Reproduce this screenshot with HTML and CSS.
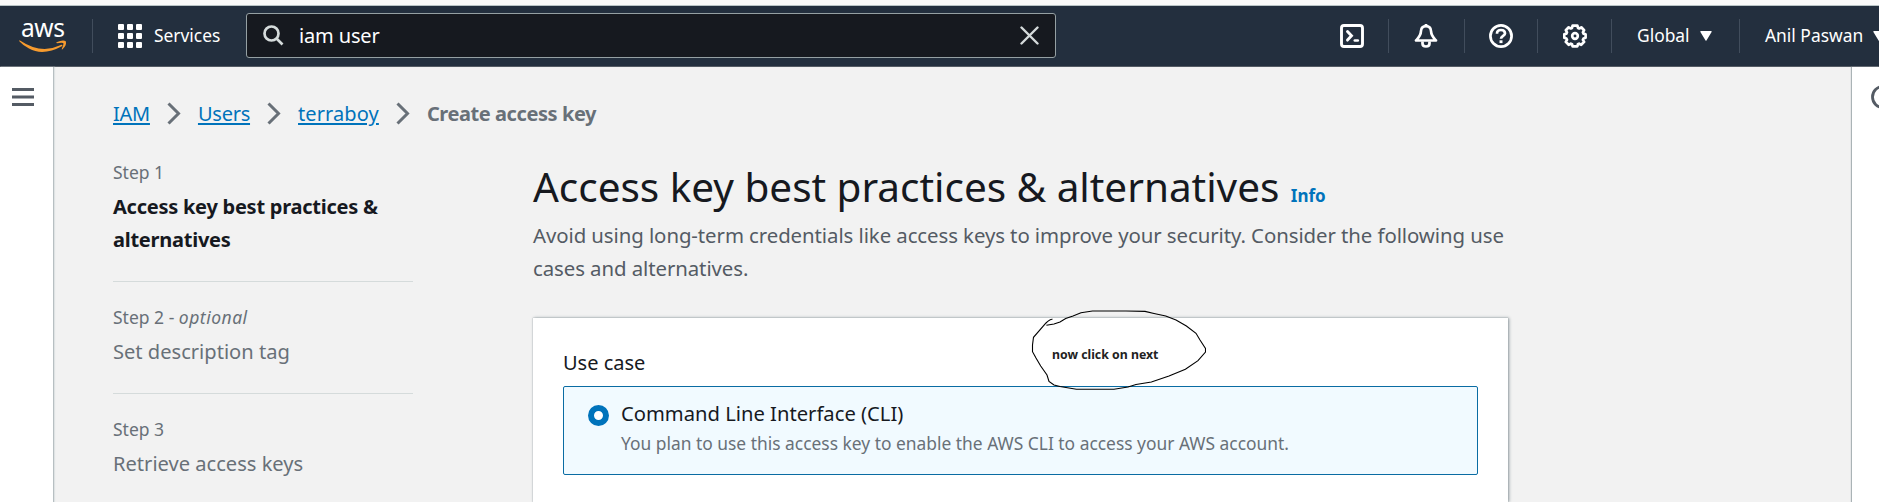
FILE: index.html
```html
<!DOCTYPE html>
<html lang="en">
<head>
<meta charset="utf-8">
<title>Create access key | IAM</title>
<link rel="stylesheet" href="styles.css">
</head>
<body>
<header class="topbar">
  <a class="logo">
    <svg width="52" height="54" viewBox="0 -6 52 54">
      <text class="logo-text" x="4" y="21.5">aws</text>
      <path d="M3 25.500 Q24 39.500 42.500 30.500 Q46 29 45.300 31 Q26 41.500 12 33.500 Q6 30.500 2.300 26.300 Q2 25 3 25.500Z" fill="#f79b2e"/>
      <path d="M39.500 27.300 Q46 24.300 48.800 26.200 Q50 30 45.500 34.300 Q44.300 35 45 33.300 Q47 29 46.200 28 Q44.500 27.200 40 28.200 Q38.800 28 39.500 27.300Z" fill="#f79b2e"/>
    </svg>
  </a>
  <span class="rule"></span>
  <div class="services">
    <svg width="24" height="24" viewBox="0 0 24 24" fill="#fff">
      <rect width="6" height="6" rx="1"/><rect x="9" width="6" height="6" rx="1"/><rect x="18" width="6" height="6" rx="1"/>
      <rect y="9" width="6" height="6" rx="1"/><rect x="9" y="9" width="6" height="6" rx="1"/><rect x="18" y="9" width="6" height="6" rx="1"/>
      <rect y="18" width="6" height="6" rx="1"/><rect x="9" y="18" width="6" height="6" rx="1"/><rect x="18" y="18" width="6" height="6" rx="1"/>
    </svg>
    <span>Services</span>
  </div>
  <div class="search">
    <svg width="21" height="21" viewBox="0 0 21 21" fill="none" stroke="#d5dbdb" stroke-width="2.700"><circle cx="8.500" cy="8.500" r="7"/><path d="M13.500 13.500l6 6"/></svg>
    <span class="query">iam user</span>
    <svg width="19" height="19" viewBox="0 0 19 19" fill="none" stroke="#d5dbdb" stroke-width="2.400" stroke-linecap="round"><path d="M1.500 1.500l16 16M17.500 1.500l-16 16"/></svg>
  </div>
  <nav class="tools">
    <span class="tool tool-shell">
      <svg width="24" height="24" viewBox="0 0 24 24" fill="none" stroke="#fff" stroke-width="2.900"><rect x="1.500" y="1.500" width="21" height="21" rx="2.500"/><path d="M7.500 7.500l4 4.300-4 4.300" stroke-linecap="round"/><path d="M14.800 16.500h3" stroke-width="2.600" stroke-linecap="round"/></svg>
    </span>
    <span class="tool tool-bell">
      <svg width="24" height="24" viewBox="0 0 24 24" fill="none" stroke="#fff" stroke-width="2.700" stroke-linejoin="round"><path d="M12 2.200C8.500 2.200 7 4.700 6.900 7.500C6.800 11.500 5 13 2 16.500H22C19 13 17.200 11.500 17.100 7.500C17 4.700 15.500 2.200 12 2.200Z"/><path d="M8.500 17.500v2c0 1.800 1.500 3 3.500 3s3.500-1.200 3.500-3v-2M12 0v2"/></svg>
    </span>
    <span class="tool tool-help">
      <svg width="24" height="24" viewBox="0 0 24 24" fill="none" stroke="#fff" stroke-width="2.700"><circle cx="12" cy="12" r="10.600"/><path d="M8 9.700C8 7.300 9.700 6 12 6s4 1.300 4 3.400c0 2.400-4 2.700-4 5.400"/><path d="M10.500 17.700h3" stroke-width="2.800"/></svg>
    </span>
    <span class="tool tool-gear">
      <svg width="24" height="24" viewBox="0 0 24 24" fill="none" stroke="#fff" stroke-width="2.700" stroke-linejoin="round"><path d="M9.600 1.700h4.800l.6 2.300 1.200.5 2.100-1.200 2.800 2.900-1.200 2.100.6 1.300 2.100.600v3.600l-2.100.700-.6 1.300 1.200 2.100-2.900 2.900-2.100-1.200-1.200.6-.5 2.100h-4.800l-.6-2.100-1.200-.6-2.100 1.200-2.900-2.900 1.200-2.100-.6-1.300-2.100-.7v-3.600l2.100-.6.6-1.300-1.200-2.100 2.900-2.900 2.100 1.200 1.200-.5z"/><circle cx="12" cy="12" r="2.800"/></svg>
    </span>
    <span class="tool tool-region">Global <svg width="12" height="10" viewBox="0 0 12 10" fill="#fff"><path d="M1 0h10q1.200 0 .6 1L6.600 9.300q-.6 1-1.200 0L.4 1Q-.2 0 1 0z"/></svg></span>
    <span class="tool tool-account">Anil Paswan <svg width="12" height="10" viewBox="0 0 12 10" fill="#fff"><path d="M1 0h10q1.200 0 .6 1L6.600 9.300q-.6 1-1.200 0L.4 1Q-.2 0 1 0z"/></svg></span>
  </nav>
</header>
<div class="layout">
  <aside class="side side-left">
    <svg width="22" height="19" viewBox="0 0 22 19" fill="#545b64"><path d="M0 0h22v3H0zM0 7.500h22v3H0zM0 15h22v3H0z"/></svg>
  </aside>
  <main class="main">
    <nav class="crumbs">
      <a class="crumb">IAM</a>
      <svg class="chevron" width="14" height="23" viewBox="0 0 14 23"><path d="M1.500 1.500l10 10-10 10"/></svg>
      <a class="crumb">Users</a>
      <svg class="chevron" width="14" height="23" viewBox="0 0 14 23"><path d="M1.500 1.500l10 10-10 10"/></svg>
      <a class="crumb crumb-user">terraboy</a>
      <svg class="chevron" width="14" height="23" viewBox="0 0 14 23"><path d="M1.500 1.500l10 10-10 10"/></svg>
      <span class="crumb-current">Create access key</span>
    </nav>
    <div class="columns">
      <ol class="steps">
        <li class="step"><div class="step-no">Step 1</div><div class="step-name step-active">Access key best practices &amp; alternatives</div></li>
        <li class="step"><div class="step-no">Step 2 - <i>optional</i></div><div class="step-name">Set description tag</div></li>
        <li class="step"><div class="step-no">Step 3</div><div class="step-name">Retrieve access keys</div></li>
      </ol>
      <section class="content">
        <h1 class="title">Access key best practices &amp; alternatives <a class="info">Info</a></h1>
        <p class="lead">Avoid using long-term credentials like access keys to improve your security. Consider the following use cases and alternatives.</p>
        <div class="card">
          <div class="label">Use case</div>
          <div class="tile">
            <span class="radio"></span>
            <div>
              <div class="tile-name">Command Line Interface (CLI)</div>
              <div class="tile-desc">You plan to use this access key to enable the AWS CLI to access your AWS account.</div>
            </div>
          </div>
          <div class="note">
            <svg width="176" height="80" viewBox="0 0 176 80" fill="none" stroke="#000" stroke-width="1.100"><path d="M22.500 9.300Q20 9 16 13L3.500 27.300L2.500 35L2.500 41.700L6 48L10.700 56L17 65L19 71.500L24 75L30 76.500L46.400 79.300H84L98 77L106 74.500L121.400 72L139 66L155.400 59.300L168 50.700L175.500 42V38.500L170 30L166 23.300L156.400 16L146 10L135.700 6L124 3.500L115 1.400L96 1H62.500L51 2.700L43 6L35.700 8.500L30 12L24 14L16.400 15.300"/></svg>
            <span class="note-text">now click on next</span>
          </div>
        </div>
      </section>
    </div>
  </main>
  <aside class="side side-right">
    <svg width="8" height="24" viewBox="0 0 8 24" fill="none" stroke="#545b64" stroke-width="2.800"><circle cx="12" cy="12" r="10.500"/></svg>
  </aside>
</div>
</body>
</html>
```
FILE: styles.css
```css
* { box-sizing: border-box; }
body {
  margin: 0;
  height: 502px;
  overflow: hidden;
  display: flex;
  flex-direction: column;
  background: #f2f2f2;
  color: #16191f;
  font: 20px/33px "Noto Sans", "Open Sans", sans-serif;
}
svg { display: block; flex: none; }

.topbar {
  flex: none;
  height: 67px;
  display: flex;
  align-items: center;
  background: #232f3e;
  border-bottom: 1px solid #545b64;
  border-top: 5px solid #fafafa;
  box-shadow: inset 0 1px #b9c4c6;
  color: #fff;
  font-size: 17.4px;
}
.logo { margin: 1px 21px 0 17px; width: 54px; }
.logo-text { font: 24.5px "Noto Sans", sans-serif; fill: #fff; letter-spacing: -0.4px; }
.rule { width: 1px; height: 34px; background: #414d5c; }
.services { display: flex; align-items: center; gap: 12px; margin-left: 25px; width: 128px; }
.search {
  width: 810px;
  height: 45px;
  display: flex;
  align-items: center;
  padding: 0 16px;
  background: #16191f;
  border: 1px solid #95a0a3;
  border-radius: 3px;
}
.query { flex: 1; margin-left: 15px; font-size: 20px; letter-spacing: -0.15px; }
.tools { display: flex; align-items: center; margin-left: 259px; flex: 1; overflow: hidden; }
.tool { flex: none; height: 34px; display: flex; align-items: center; justify-content: center; border-right: 1px solid #414d5c; }
.tool-shell { width: 74px; }
.tool-bell { width: 76px; padding-right: 2px; }
.tool-help { width: 73px; }
.tool-gear { width: 74px; }
.tool-region { width: 128px; justify-content: flex-start; padding-left: 25px; gap: 10px; }
.tool-account { justify-content: flex-start; padding-left: 25px; gap: 10px; border: 0; }

.layout { flex: 1; display: flex; min-height: 0; }
.side { flex: none; background: #fff; }
.side-left { width: 54px; padding: 21px 0 0 12px; border-right: 1px solid #b7bfc2; box-shadow: 1px 0 1px #dfe3e4; }
.side-right { width: 27px; padding: 18px 0 0 19px; box-shadow: -1px 0 1px #aab3b6; }
.main { flex: 1; min-width: 0; padding: 30px 0 0 59px; }

.crumbs { display: flex; align-items: center; height: 33px; }
.crumb {
  color: #0073bb;
  letter-spacing: -0.25px;
  text-decoration: underline;
  text-decoration-thickness: 2px;
  text-underline-offset: 2px;
}
.crumb-user { letter-spacing: 0.1px; }
.crumb-current { color: #687078; font-weight: 700; letter-spacing: -0.42px; }
.chevron { margin: 0 17px; fill: none; stroke: #687078; stroke-width: 3; }

.columns { display: flex; gap: 120px; margin-top: 29px; }
.steps { list-style: none; margin: 0; padding: 0; width: 300px; flex: none; color: #687078; }
.step { border-bottom: 1px solid #d5dbdb; padding-bottom: 25px; margin-bottom: 22px; }
.step:last-child { border: 0; padding: 0; margin: 0; }
.step-no { font-size: 17.5px; line-height: 27px; margin-bottom: 4px; }
.step-no i { letter-spacing: 0.5px; }
.step-name { font-size: 20.1px; }
.step-active { font-size: 20px; color: #16191f; font-weight: 700; letter-spacing: -0.25px; }

.content { width: 975px; }
.title { margin: 3px 0 7px; font-size: 40.5px; line-height: 50px; height: 50px; font-weight: 400; white-space: nowrap; letter-spacing: -0.03px; }
.info { font-size: 17px; line-height: 20px; font-weight: 700; color: #0073bb; letter-spacing: 0; margin-left: 1px; }
.lead { margin: 0 0 33px; font-size: 20.4px; letter-spacing: -0.08px; color: #545b64; }
.card {
  position: relative;
  height: 184px;
  padding: 28px 30px 0;
  background: #fff;
  box-shadow: 0 0 1px #8f999e, 1px 0 3px #8f999e;
}
.label { margin-bottom: 7px; font-size: 20px; }
.tile {
  height: 89px;
  display: flex;
  gap: 12px;
  padding: 10px 24px;
  background: #f1faff;
  border: 1px solid #0a6ca3;
  border-radius: 2px;
}
.radio { flex: none; width: 21px; height: 21px; margin-top: 8px; border: 6px solid #0073bb; border-radius: 50%; background: #fff; }
.tile-name { font-size: 20.2px; }
.tile-desc { font-size: 17.4px; line-height: 27px; color: #687078; }

/* Hand-drawn annotation lying over the card */
.note { position: absolute; left: 497px; top: -8px; width: 176px; height: 80px; }
.note-text { position: absolute; left: 22px; top: 36px; font-size: 12.3px; line-height: 18px; font-weight: 700; color: #222; white-space: nowrap; }
```
